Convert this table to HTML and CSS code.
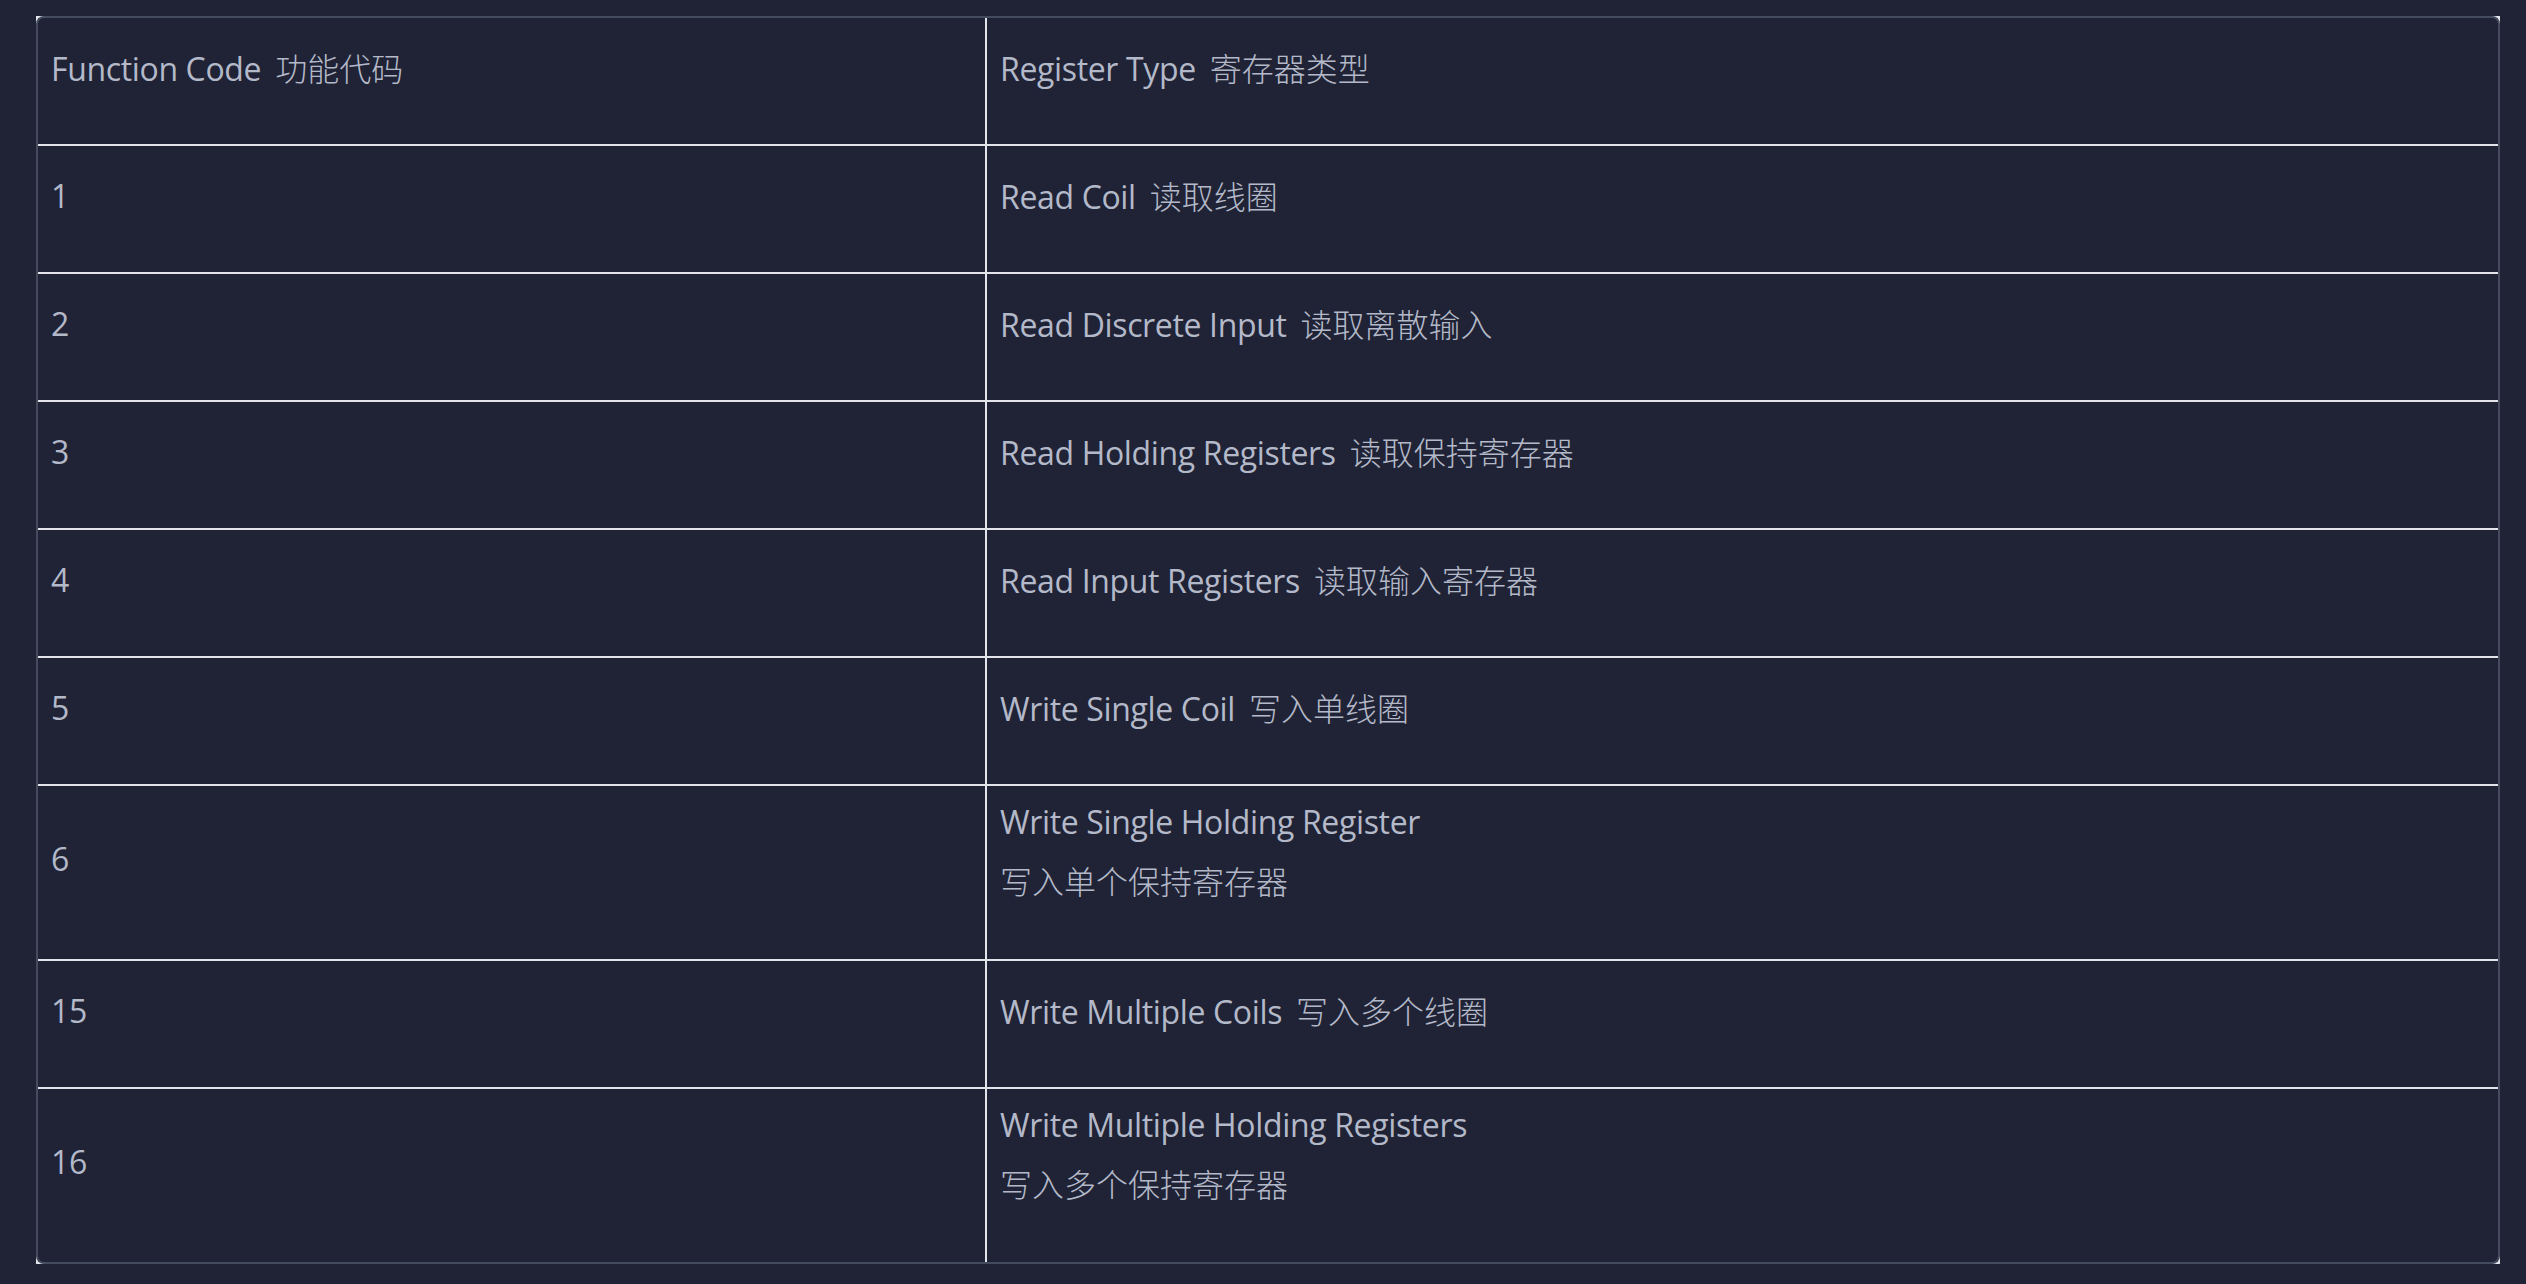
FILE: index.html
```html
<!DOCTYPE html>
<html lang="zh-CN">
<head>
    <meta charset="UTF-8">
    <meta name="viewport" content="width=device-width, initial-scale=1.0">
    <title>Modbus 功能码</title>
    <link rel="stylesheet" href="styles.css">
</head>
<body>
    <div class="table-wrap">
        <table class="codes">
            <colgroup>
                <col class="col-code">
                <col class="col-type">
            </colgroup>
            <thead>
                <tr>
                    <th>Function Code <span class="zh">功能代码</span></th>
                    <th>Register Type <span class="zh">寄存器类型</span></th>
                </tr>
            </thead>
            <tbody>
                <tr>
                    <td>1</td>
                    <td>Read Coil <span class="zh">读取线圈</span></td>
                </tr>
                <tr>
                    <td>2</td>
                    <td>Read Discrete Input <span class="zh">读取离散输入</span></td>
                </tr>
                <tr>
                    <td>3</td>
                    <td>Read Holding Registers <span class="zh">读取保持寄存器</span></td>
                </tr>
                <tr>
                    <td>4</td>
                    <td>Read Input Registers <span class="zh">读取输入寄存器</span></td>
                </tr>
                <tr>
                    <td>5</td>
                    <td>Write Single Coil <span class="zh">写入单线圈</span></td>
                </tr>
                <tr>
                    <td>6</td>
                    <td>
                        <div class="stack">
                            <span>Write Single Holding Register</span>
                            <span>写入单个保持寄存器</span>
                        </div>
                    </td>
                </tr>
                <tr>
                    <td>15</td>
                    <td>Write Multiple Coils <span class="zh">写入多个线圈</span></td>
                </tr>
                <tr>
                    <td>16</td>
                    <td>
                        <div class="stack">
                            <span>Write Multiple Holding Registers</span>
                            <span>写入多个保持寄存器</span>
                        </div>
                    </td>
                </tr>
            </tbody>
        </table>
    </div>
</body>
</html>
```

FILE: styles.css
```css
*{
    margin: 0;
    padding: 0;
    box-sizing: border-box;
}

body{
    background: #1f2335;
    color: #b4b9c9;
    font-family: "Open Sans", "Noto Sans", "Noto Sans CJK SC", sans-serif;
    font-size: 32px;
    padding: 16px 26px 20px 36px;
}

.table-wrap{
    position: relative;
}
/* rounded frame drawn over the table's square edge */
.table-wrap::after{
    content: "";
    position: absolute;
    inset: 0;
    border: 2px solid #454b5f;
    border-radius: 8px;
    pointer-events: none;
}

.codes{
    width: 100%;
    border-collapse: collapse;
    table-layout: fixed;
    border: 2px solid #e2e4ea;
}
.col-code{
    width: 949px;
}
.codes th,
.codes td{
    border: 2px solid #e2e4ea;
    font-weight: normal;
    text-align: left;
    vertical-align: middle;
    height: 128px;
    padding: 0 13px 27px;
    line-height: 40px;
    letter-spacing: -0.35px;
}

.zh{
    font-family: "Noto Sans CJK SC", sans-serif;
    font-weight: 300;
    margin-left: 6px;
    letter-spacing: 0;
}

.stack{
    display: flex;
    flex-direction: column;
    line-height: 59px;
    padding: 6px 0 22px;
}
.stack span:last-child{
    font-family: "Noto Sans CJK SC", sans-serif;
    font-weight: 300;
    letter-spacing: 0;
}
```
